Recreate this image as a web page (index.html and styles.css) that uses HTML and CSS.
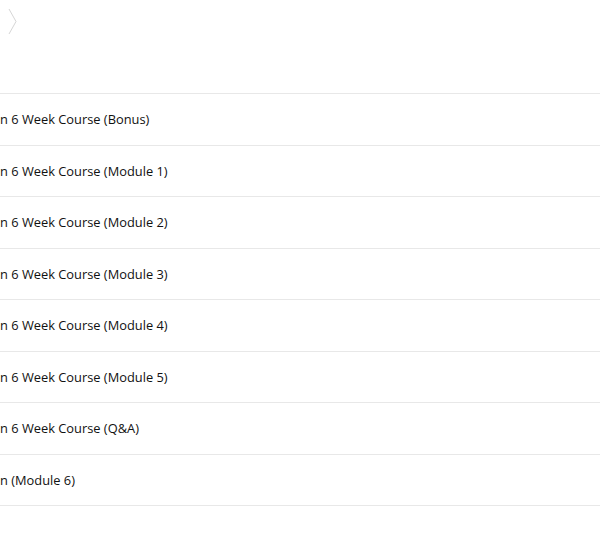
FILE: index.html
```html
<!DOCTYPE html>
<html lang="en">

<head>
  <meta charset="UTF-8">
  <meta name="viewport" content="width=device-width, initial-scale=1.0">
  <title>Course</title>
  <link rel="stylesheet" href="styles.css">
</head>

<body>
  <div class="header">
    <svg class="chevron" width="20" height="40" viewBox="0 0 20 40">
      <polyline points="9,9 16,21.5 9,34" fill="none" stroke="#d6d6d6" stroke-width="1"/>
    </svg>
  </div>
  <ul class="list">
    <li class="row">n 6 Week Course (Bonus)</li>
    <li class="row">n 6 Week Course (Module 1)</li>
    <li class="row">n 6 Week Course (Module 2)</li>
    <li class="row">n 6 Week Course (Module 3)</li>
    <li class="row">n 6 Week Course (Module 4)</li>
    <li class="row">n 6 Week Course (Module 5)</li>
    <li class="row">n 6 Week Course (Q&amp;A)</li>
    <li class="row">n (Module 6)</li>
  </ul>
</body>
</html>
```

FILE: styles.css
```css
html, body {
  margin: 0;
  padding: 0;
  background-color: #ffffff;
  font-family: "Open Sans", "Liberation Sans", sans-serif;
  color: #111111;
}

.header {
  height: 93px;
}

.chevron {
  display: block;
}

.list {
  list-style: none;
  margin: 0;
  padding: 0;
  border-top: 1px solid #e8e8e8;
}

.row {
  font-size: 12.85px;
  line-height: 18px;
  padding: 16.25px 0;
  border-bottom: 1px solid #e8e8e8;
}
```
